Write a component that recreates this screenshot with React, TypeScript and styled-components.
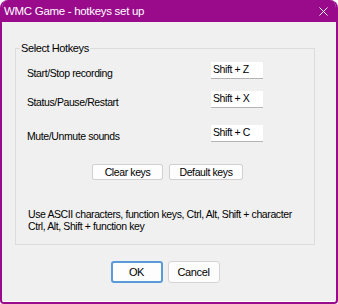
import React from 'react';
import styled, {createGlobalStyle} from 'styled-components';

const GlobalStyle = createGlobalStyle`
  html, body {
    margin: 0;
    padding: 0;
    background: #ffffff;
  }
  * {
    box-sizing: border-box;
  }
`

type HotkeyType = {
    label: string
    value: string
    top: number
}

const hotkeys: HotkeyType[] = [
    {label: 'Start/Stop recording', value: 'Shift + Z', top: 7},
    {label: 'Status/Pause/Restart', value: 'Shift + X', top: 12},
    {label: 'Mute/Unmute sounds', value: 'Shift + C', top: 17},
]

const App = () => {
    return (
        <>
            <GlobalStyle/>
            <Window>
                <TitleBar>
                    <Title>WMC Game - hotkeys set up</Title>
                    <Close aria-label="close">
                        <svg width="9" height="9" viewBox="0 0 9 9">
                            <path d="M0.5 0.5 L8.5 8.5 M8.5 0.5 L0.5 8.5" stroke="#ffffff" strokeWidth="1"/>
                        </svg>
                    </Close>
                </TitleBar>
                <Body>
                    <Group>
                        <Legend>Select Hotkeys</Legend>
                        {hotkeys.map(h => (
                            <Row key={h.label} top={h.top}>
                                <Label>{h.label}</Label>
                                <KeyBox>{h.value}</KeyBox>
                            </Row>
                        ))}
                        <KeyButtons>
                            <SmallButton width={71}>Clear keys</SmallButton>
                            <SmallButton width={74}>Default keys</SmallButton>
                        </KeyButtons>
                        <Help>
                            Use ASCII characters, function keys, Ctrl, Alt, Shift + character<br/>
                            Ctrl, Alt, Shift + function key
                        </Help>
                    </Group>
                    <Footer>
                        <DialogButton primary>OK</DialogButton>
                        <DialogButton>Cancel</DialogButton>
                    </Footer>
                </Body>
            </Window>
        </>
    )
}

export default App

const Window = styled.div`
  width: 338px;
  height: 304px;
  display: flex;
  flex-direction: column;
  background: #f0f0f0;
  border: 2px solid #9a0b8c;
  border-top: none;
  border-radius: 8px 8px 4px 4px;
  overflow: hidden;
  font-family: "Liberation Sans", Arial, sans-serif;
  font-size: 10.5px;
  letter-spacing: -0.4px;
  color: #000;
`

const TitleBar = styled.div`
  height: 22px;
  flex-shrink: 0;
  background: #9a0b8c;
  display: flex;
  align-items: center;
  justify-content: space-between;
  padding: 0 9px 0 2px;
  margin: 0 -2px;
`

const Title = styled.div`
  color: #ffffff;
  font-size: 11.5px;
  padding-left: 2px;
  letter-spacing: -0.3px;
`

const Close = styled.div`
  width: 12px;
  height: 12px;
  display: flex;
  align-items: center;
  justify-content: center;
`

const Body = styled.div`
  flex: 1;
  display: flex;
  flex-direction: column;
  padding: 19px 21px 0 13px;
  border-bottom: 1px solid #ffffff;
`

const Group = styled.fieldset`
  margin: 0;
  padding: 0 12px 0 11px;
  height: 204px;
  border: 1px solid #dcdcdc;
  display: flex;
  flex-direction: column;
`

const Legend = styled.legend`
  font-size: 11px;
  padding: 0 1px;
  margin-left: -7px;
  line-height: 14px;
`

const Row = styled.div<{ top: number }>`
  display: grid;
  grid-template-columns: 184px 52px;
  align-items: center;
  margin-top: ${props => props.top}px;
`

const Label = styled.div`
  padding-top: 4px;
`

const KeyBox = styled.div`
  height: 17px;
  background: #ffffff;
  border-bottom: 1px solid #b4b4b4;
  padding: 1px 0 0 2px;
`

const KeyButtons = styled.div`
  display: flex;
  justify-content: center;
  gap: 6px;
  margin-top: 22px;
  padding-left: 6px;
`

const SmallButton = styled.div<{ width: number }>`
  width: ${props => props.width}px;
  height: 16px;
  background: #fdfdfd;
  border: 1px solid #d0d0d0;
  border-radius: 2px;
  display: flex;
  align-items: center;
  justify-content: center;
`

const Help = styled.div`
  line-height: 12px;
  margin-top: 28px;
  padding-left: 1px;
`

const Footer = styled.div`
  display: flex;
  justify-content: center;
  gap: 5px;
  margin-top: 16px;
`

const DialogButton = styled.div<{ primary?: boolean }>`
  width: 52px;
  height: 22px;
  background: #fdfdfd;
  border: ${props => props.primary ? '2px solid #5a9ad8' : '1px solid #d4d4d4'};
  border-radius: 3px;
  font-size: 11px;
  display: flex;
  align-items: center;
  justify-content: center;
`
